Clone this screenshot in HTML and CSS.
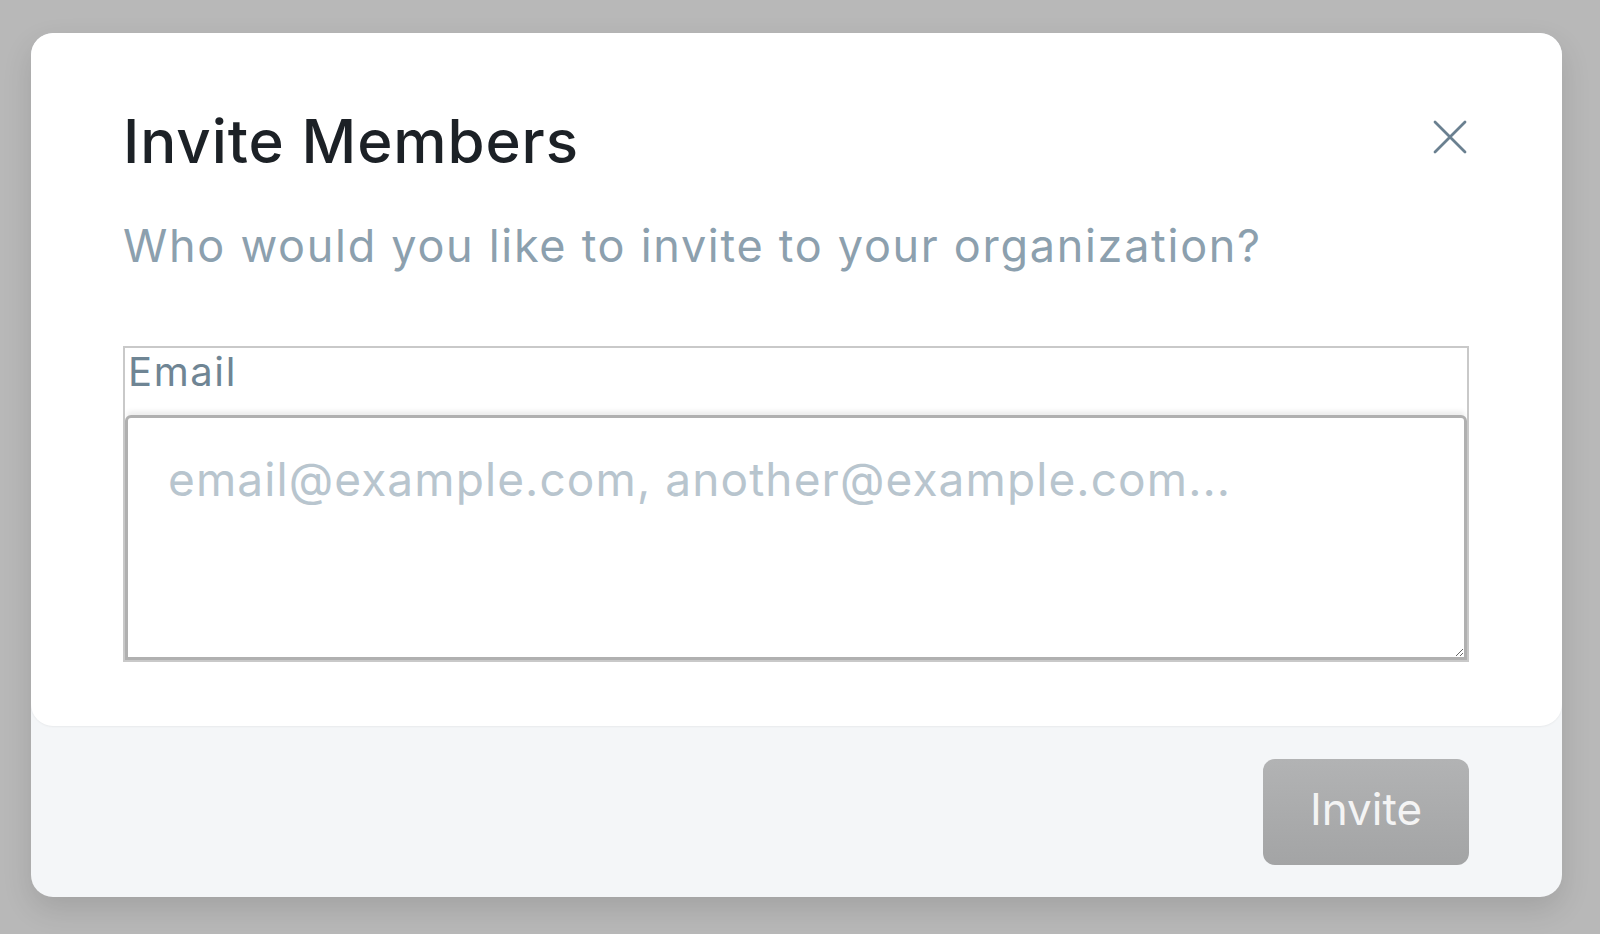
FILE: index.html
```html
<!DOCTYPE html>
<html lang="en">

<head>
    <meta charset="UTF-8">
    <meta name="viewport" content="width=device-width, initial-scale=1.0">
    <title>Invite Members</title>
    <link rel="stylesheet" href="styles.css">
</head>

<body>
    <div class="modal">

        <div class="modalBody">
            <div class="modalHead">
                <h2 class="modalTitle">Invite Members</h2>
                <button class="closeBtn" type="button" aria-label="Close">
                    <svg width="34" height="34" viewBox="0 0 34 34">
                        <path d="M2 2 L32 32 M32 2 L2 32" stroke="#6a8090" stroke-width="2.8"
                            stroke-linecap="round" fill="none" />
                    </svg>
                </button>
            </div>

            <p class="modalText">Who would you like to invite to your organization?</p>

            <label class="field">
                <span class="fieldLabel">Email</span>
                <textarea class="emails" placeholder="email@example.com, another@example.com..."></textarea>
            </label>
        </div>

        <div class="modalFooter">
            <button class="inviteBtn" type="button" disabled>Invite</button>
        </div>

    </div>
</body>

</html>
```

FILE: styles.css
```css
body {
    margin: 0;
    padding: 33px 38px 0 31px;
    background: #b8b8b8;
    font-family: Inter, "Noto Sans", sans-serif;
    height: 100vh;
    box-sizing: border-box;
    overflow: hidden;
}

.modal {
    background: #f4f6f8;
    border-radius: 22px;
    box-shadow: 0 12px 30px rgba(0, 0, 0, 0.12);
    overflow: hidden;
}

.modalBody {
    background: #fff;
    border-radius: 22px;
    padding: 72px 93px 64px 92px;
    box-shadow: 0 1px 2px rgba(0, 0, 0, 0.05);
}

.modalHead {
    display: flex;
    justify-content: space-between;
    align-items: flex-start;
}

.modalTitle {
    margin: 0;
    font-size: 60px;
    line-height: 72px;
    font-weight: 500;
    letter-spacing: 0.9px;
    color: #1c2126;
}

.closeBtn {
    margin: 15px 2px 0 0;
    padding: 0;
    border: none;
    background: none;
    line-height: 0;
    cursor: pointer;
}

.modalText {
    margin: 42px 0 73px;
    font-size: 45px;
    line-height: 54px;
    letter-spacing: 1.7px;
    color: #8ca0ae;
}

.field {
    display: block;
    border: 2px solid #c9c9c9;
}

.fieldLabel {
    display: block;
    padding-left: 3px;
    font-size: 40px;
    line-height: 48px;
    letter-spacing: 1.6px;
    color: #6f8594;
    margin-bottom: 19px;
}

.emails {
    display: block;
    width: 100%;
    height: 245px;
    box-sizing: border-box;
    margin: 0;
    padding: 34px 40px;
    border: 3px solid #b0b0b0;
    border-radius: 6px 6px 0 0;
    box-shadow: 0 -6px 5px -2px rgba(0, 0, 0, 0.07);
    font-family: Inter, "Noto Sans", sans-serif;
    font-size: 46px;
    line-height: 55px;
    letter-spacing: 1.1px;
    color: #1c2126;
    resize: vertical;
    outline: none;
}

.emails::placeholder {
    color: #b8c5ce;
}

.modalFooter {
    display: flex;
    justify-content: flex-end;
    padding: 33px 93px 32px;
}

.inviteBtn {
    width: 206px;
    height: 106px;
    padding: 0 0 6px;
    border: none;
    border-radius: 12px;
    background: linear-gradient(#b2b3b4, #a3a4a5);
    color: #f4f4f4;
    font-family: Inter, "Noto Sans", sans-serif;
    font-size: 44px;
}
```
